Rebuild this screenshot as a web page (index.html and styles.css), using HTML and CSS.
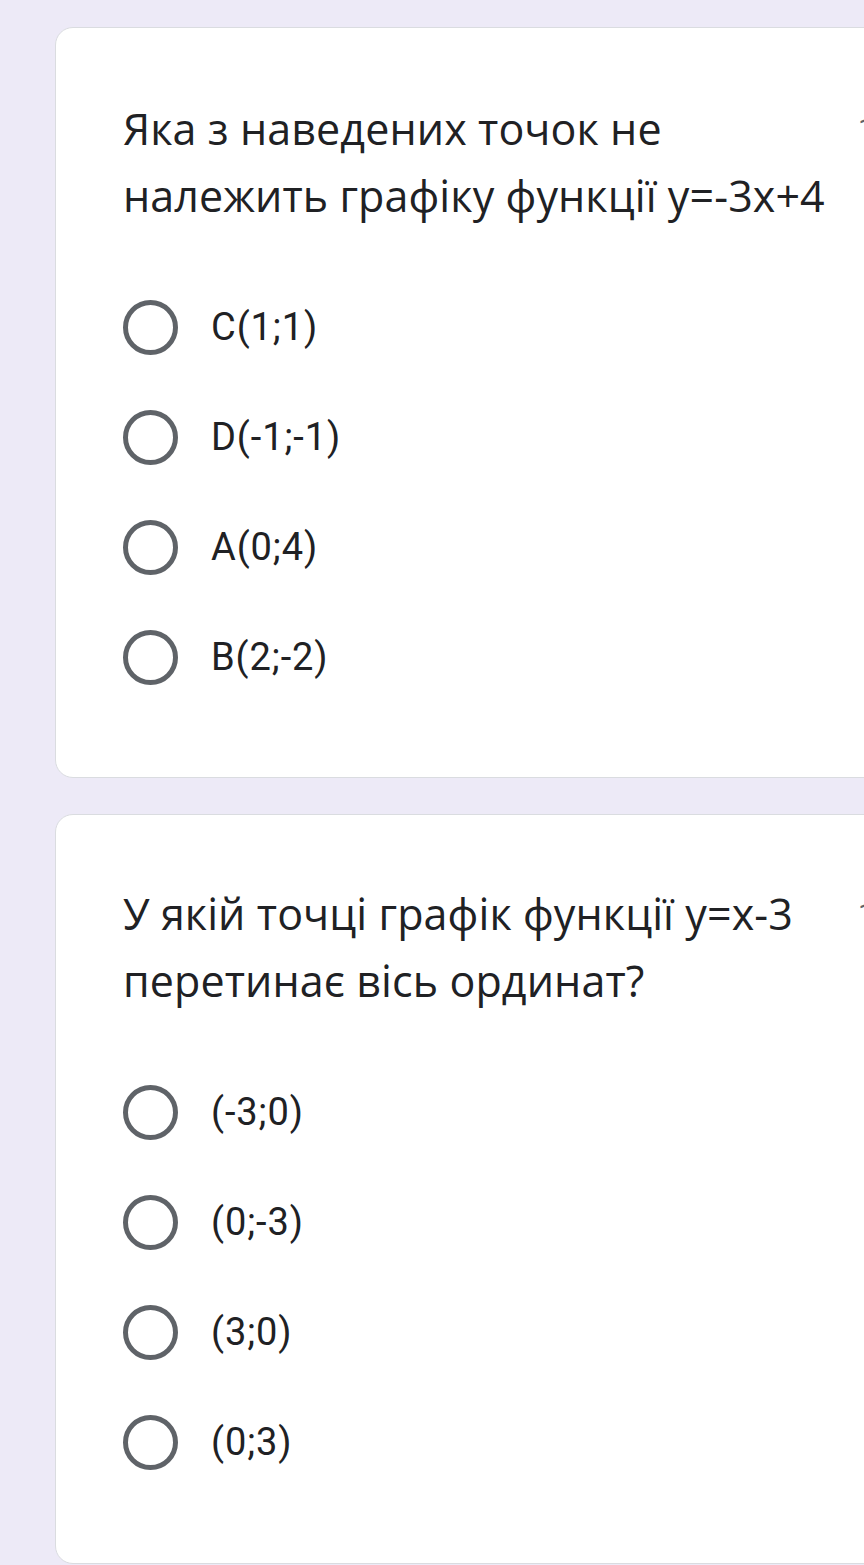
FILE: index.html
```html
<!DOCTYPE html>
<html lang="uk">
<head>
<meta charset="utf-8">
<link rel="stylesheet" href="styles.css">
</head>
<body>
<div class="page">
  <section class="card">
    <div class="head">
      <div class="title">Яка з наведених точок не<br>належить графіку функції y=-3x+4</div>
      <div class="points">1 бал</div>
    </div>
    <div class="options">
      <div class="opt"><span class="radio"></span><span class="label">C(1;1)</span></div>
      <div class="opt"><span class="radio"></span><span class="label">D(-1;-1)</span></div>
      <div class="opt"><span class="radio"></span><span class="label">A(0;4)</span></div>
      <div class="opt"><span class="radio"></span><span class="label">B(2;-2)</span></div>
    </div>
  </section>
  <section class="card second">
    <div class="head">
      <div class="title">У якій точці графік функції y=x-3<br>перетинає вісь ординат?</div>
      <div class="points">1 бал</div>
    </div>
    <div class="options">
      <div class="opt"><span class="radio"></span><span class="label">(-3;0)</span></div>
      <div class="opt"><span class="radio"></span><span class="label">(0;-3)</span></div>
      <div class="opt"><span class="radio"></span><span class="label">(3;0)</span></div>
      <div class="opt"><span class="radio"></span><span class="label">(0;3)</span></div>
    </div>
  </section>
</div>
</body>
</html>
```
FILE: styles.css
```css
html, body {
  margin: 0;
  padding: 0;
}
body {
  background: #edeaf7;
  overflow: hidden;
  width: 864px;
  height: 1565px;
}
.page {
  padding-top: 27px;
  padding-left: 55px;
}
.card {
  box-sizing: border-box;
  width: 900px;
  height: 751px;
  background: #ffffff;
  border: 1px solid #dadce0;
  border-radius: 18px;
  padding: 67px 0 0 67px;
}
.card.second {
  margin-top: 36px;
  height: 750px;
  padding-top: 65px;
}
.head {
  display: flex;
  align-items: flex-start;
}
.title {
  width: 735px;
  flex: none;
  font-family: "Open Sans", "Noto Sans", sans-serif;
  font-size: 43px;
  line-height: 67px;
  letter-spacing: 0.1px;
  color: #202124;
  white-space: nowrap;
}
.points {
  font-family: Roboto, sans-serif;
  font-size: 30px;
  line-height: 67px;
  color: #5f6368;
  white-space: nowrap;
}
.options {
  margin-top: 43px;
  display: flex;
  flex-direction: column;
}
.opt {
  height: 110px;
  display: flex;
  align-items: center;
}
.radio {
  box-sizing: border-box;
  width: 55px;
  height: 55px;
  border: 5px solid #5f6368;
  border-radius: 50%;
  flex: none;
}
.label {
  margin-left: 33px;
  font-family: Roboto, sans-serif;
  font-size: 38px;
  letter-spacing: 0.9px;
  color: #202124;
}
```
